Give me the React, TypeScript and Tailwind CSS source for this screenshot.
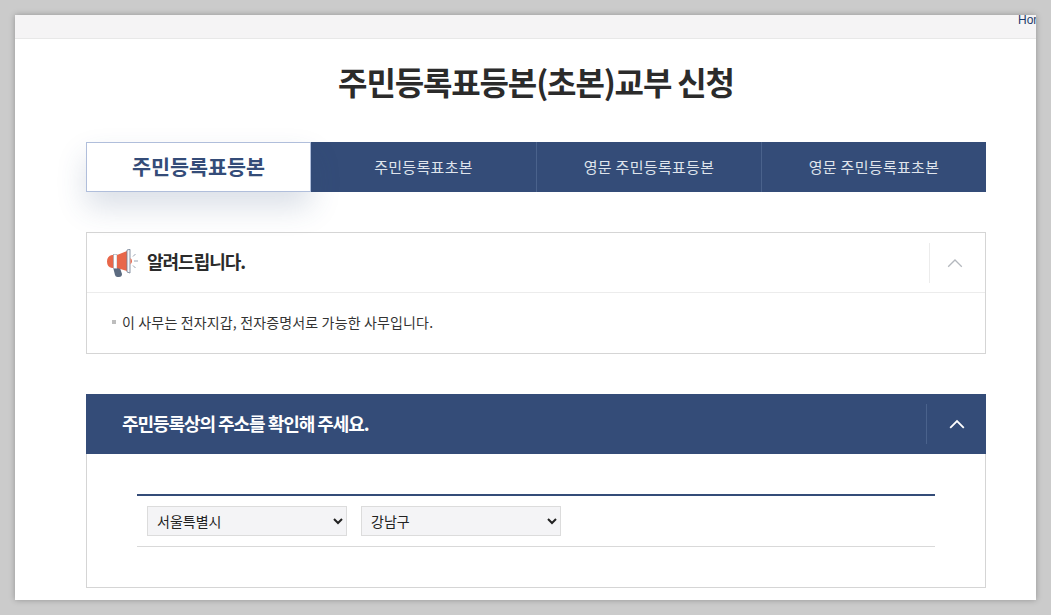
import React from "react";

const font = { fontFamily: '"Noto Sans CJK KR", "Noto Sans", sans-serif' };

function Chevron({ color, width }: { color: string; width: number }) {
  return (
    <svg width="16" height="10" viewBox="0 0 16 10" fill="none">
      <path d="M1.2 8.8 L8 2 L14.8 8.8" stroke={color} strokeWidth={width} />
    </svg>
  );
}

function Megaphone() {
  return (
    <svg width="31" height="28" viewBox="0 0 31 28" fill="none">
      <path d="M6 18 L13 19 L15 25 Q15 28 12 28 L10.5 28 Q8.5 28 8 26 Z" fill="#5c6b80" />
      <path d="M5 6 L7 6 L7 19 L5 19 Q0 18 0 12.5 Q0 7 5 6 Z" fill="#e8674a" />
      <rect x="6.5" y="5.5" width="3.5" height="14" fill="#fff" stroke="#9aa3b0" strokeWidth="0.6" />
      <path d="M10 6 L20 2 L20 22 L10 19 Z" fill="#e8674a" />
      <path d="M20 1 L23 0.3 L23 24 L20 23 Z" fill="#f6f6f8" stroke="#6f7c8f" strokeWidth="0.8" />
      <path d="M23.5 9 Q26.5 12 23.5 15.5 Z" fill="#e8674a" />
      <path d="M27 12 H31 M26 7.5 L28.5 5 M26 16.5 L28.5 19" stroke="#8f9aa8" strokeWidth="0.9" />
    </svg>
  );
}

function SelectBox({ value, opts }: { value: string; opts: string[] }) {
  return (
    <select
      defaultValue={value}
      className="w-[200px] h-[30px] bg-[#f4f4f6] border border-[#dcdcdc] pl-[5px] text-[14px] text-[#222] appearance-auto"
      style={font}
    >
      {opts.map((o) => (
        <option key={o}>{o}</option>
      ))}
    </select>
  );
}

export default function App() {
  const tabs = ["주민등록표초본", "영문 주민등록표등본", "영문 주민등록표초본"];
  return (
    <div className="w-[1051px] h-[615px] overflow-hidden bg-[#cbcbcb] pt-[15px] pl-[15px]" style={font}>
      <div className="w-[1021px] h-[585px] bg-white overflow-hidden shadow-[0_0_6px_rgba(0,0,0,0.28)]">
        <div className="h-[24px] bg-[#f5f4f5] border-b border-[#e8e8e8] flex justify-end">
          <div className="w-[18px] overflow-hidden whitespace-nowrap text-[12px] leading-[11px] text-[#1c3a6b]" style={{ fontFamily: '"Liberation Sans", sans-serif' }}>
            Home
          </div>
        </div>

        <div className="px-[71px] w-[1042px]">
          <h1 className="h-[103px] pt-[17px] text-center text-[32px] leading-[50px] font-bold text-[#2b2b2b] tracking-[-1.15px]">
            주민등록표등본(초본)교부 신청
          </h1>

          <div className="flex h-[50px]">
            <div className="w-[225px] bg-white border border-[#b0bedb] shadow-[0_15px_30px_rgba(52,76,120,0.18)] flex items-center justify-center text-[20.7px] font-bold text-[#344c78] relative z-10">
              주민등록표등본
            </div>
            {tabs.map((t, i) => (
              <div
                key={t}
                className={`w-[225px] bg-[#344c78] flex items-center justify-center text-[15px] tracking-[0.3px] text-[#dfe4ec] ${i > 0 ? "border-l border-[#4a628c]" : ""}`}
              >
                {t}
              </div>
            ))}
          </div>

          <div className="mt-[40px] border border-[#d5d5d5] h-[122px]">
            <div className="h-[60px] border-b border-[#ececec] flex items-center pl-[20px]">
              <Megaphone />
              <span className="ml-[9px] mb-[2px] text-[18px] font-bold text-[#2b2b2b] tracking-[-1px]">알려드립니다.</span>
              <div className="ml-auto w-[56px] h-[40px] border-l border-[#ececec] flex items-center justify-center pr-[6px]">
                <Chevron color="#b4b8be" width={1.3} />
              </div>
            </div>
            <div className="flex items-center h-[58px] pl-[25px] text-[14px] text-[#333] tracking-[0.15px]">
              <span className="w-[4px] h-[4px] bg-[#bdbdbd] mr-[6px]" />
              이 사무는 전자지갑, 전자증명서로 가능한 사무입니다.
            </div>
          </div>

          <div className="mt-[40px] h-[60px] bg-[#344c78] flex items-center pl-[36px]">
            <span className="mb-[2px] text-[18px] font-bold text-white tracking-[-1.05px]">주민등록상의 주소를 확인해 주세요.</span>
            <div className="ml-auto w-[60px] h-[40px] border-l border-[#4a628c] flex items-center justify-center">
              <Chevron color="#ffffff" width={1.8} />
            </div>
          </div>

          <div className="h-[134px] border border-t-0 border-[#d5d5d5] pt-[40px] px-[50px]">
            <div className="w-[798px] h-[53px] border-t-2 border-b border-t-[#344c78] border-b-[#d9d9d9] pt-[10px] pl-[10px] flex gap-[14px]">
              <SelectBox value="서울특별시" opts={["서울특별시"]} />
              <SelectBox value="강남구" opts={["강남구"]} />
            </div>
          </div>
        </div>
      </div>
    </div>
  );
}
